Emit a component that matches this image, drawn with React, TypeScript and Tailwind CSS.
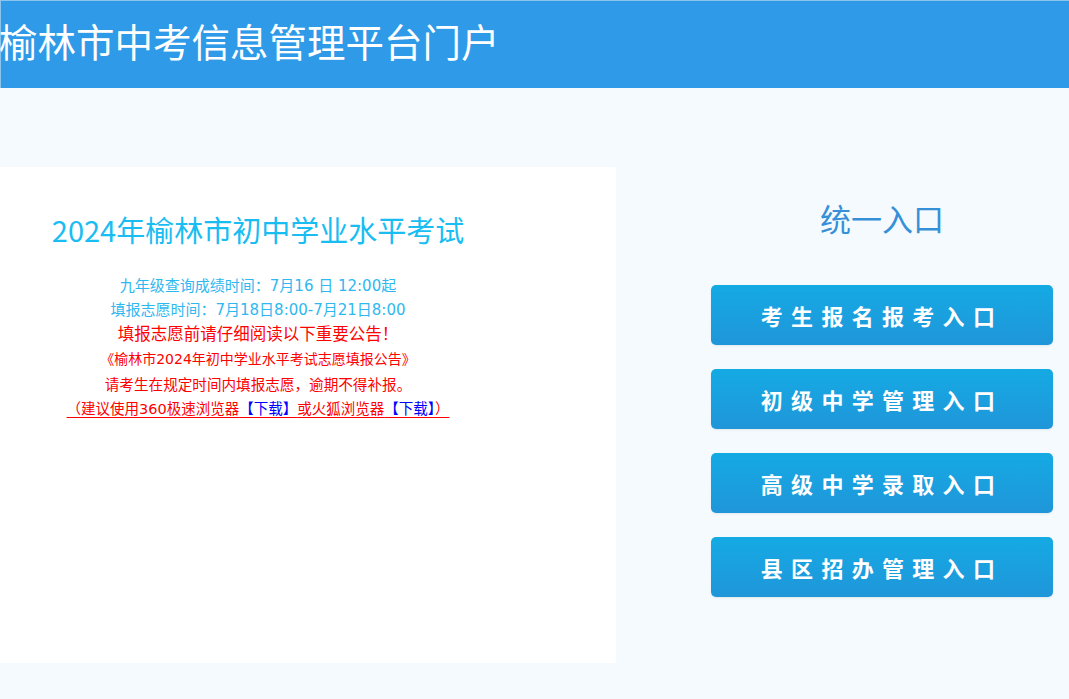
import React from 'react';

const entries = ['考生报名报考入口', '初级中学管理入口', '高级中学录取入口', '县区招办管理入口'];

// latin glyphs in the notice are wide (YaHei-like), so DejaVu goes first there
const noticeFont = { fontFamily: '"DejaVu Sans", "Noto Sans CJK SC", sans-serif' };

export default function App() {
  return (
    <div
      className="min-h-[699px] bg-[#f5faff]"
      style={{ fontFamily: '"Microsoft YaHei", "Noto Sans CJK SC", "Noto Sans", sans-serif' }}
    >
      {/* header */}
      <div className="h-[88px] bg-[#2e9ae8] border-t border-l border-[#8cc4ee] flex items-center">
        <h1 className="text-[38.5px] leading-none text-white -ml-[2px] -mt-[8px]">榆林市中考信息管理平台门户</h1>
      </div>

      <div className="flex pt-[79px]">
        {/* notice panel */}
        <div className="w-[616px] h-[496px] bg-white">
          <div className="w-[516px] flex flex-col items-center pt-[46px] text-center">
            <h2 className="text-[29px] leading-[32px] text-[#19bdf2]">2024年榆林市初中学业水平考试</h2>
            <div className="mt-[29px] flex flex-col items-center" style={noticeFont}>
              <p className="text-[15px] leading-[24px] text-[#2fb8ef]">九年级查询成绩时间：7月16 日 12:00起</p>
              <p className="text-[15px] leading-[24px] text-[#2fb8ef]">填报志愿时间：7月18日8:00-7月21日8:00</p>
              <p className="mt-[1px] text-[16.5px] leading-[24px] text-[#ff0000]">填报志愿前请仔细阅读以下重要公告！</p>
              <p className="text-[14px] leading-[24px] text-[#ff0000]">《榆林市2024年初中学业水平考试志愿填报公告》</p>
              <p className="mt-[2px] text-[14.6px] leading-[24px] text-[#ff0000]">请考生在规定时间内填报志愿，逾期不得补报。</p>
              <p className="text-[14.5px] leading-[24px] text-[#ff0000] underline underline-offset-[3px]">
                （建议使用360极速浏览器<span className="text-[#0000ff]">【下载】</span>或火狐浏览器<span className="text-[#0000ff]">【下载】</span>）
              </p>
            </div>
          </div>
        </div>

        {/* entry column */}
        <div className="pl-[95px] pt-[31px] flex flex-col">
          <div className="w-[342px] text-center text-[31px] leading-[40px] text-[#3590d8]">统一入口</div>
          <div className="mt-[47px] flex flex-col gap-[24px]">
            {entries.map(label => (
              <button
                key={label}
                className="w-[342px] h-[60px] rounded-[5px] bg-gradient-to-b from-[#14aae4] to-[#1f96d9] text-white text-[22px] font-bold tracking-[8.3px] shadow-[0_1px_2px_rgba(0,0,0,0.08)]"
              >
                {label}
              </button>
            ))}
          </div>
        </div>
      </div>
    </div>
  );
}
